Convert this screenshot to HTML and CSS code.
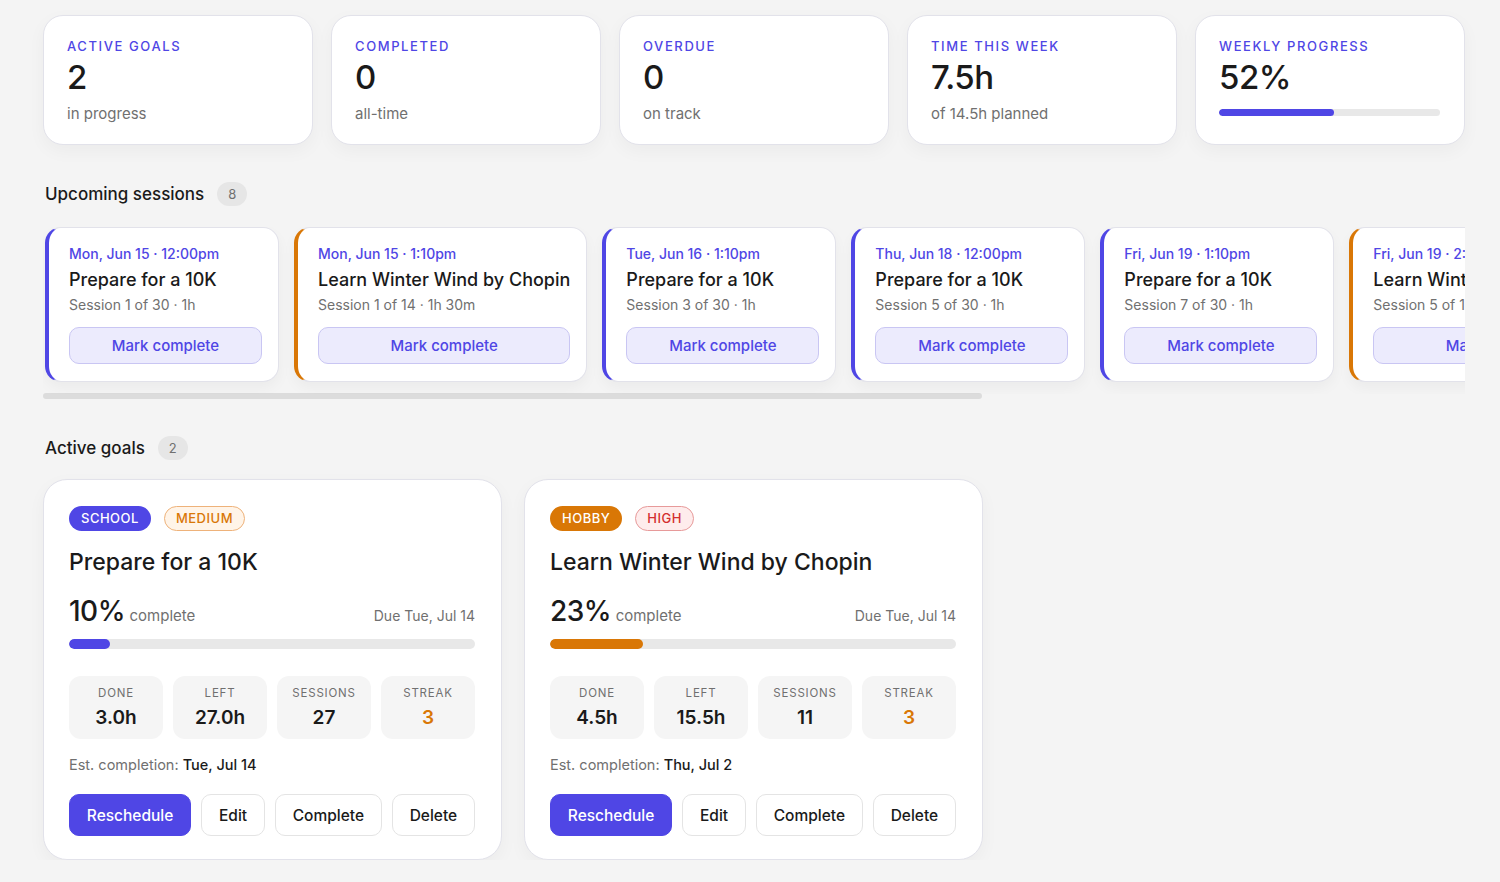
FILE: index.html
```html
<!DOCTYPE html>
<html lang="en">
<head>
    <meta charset="UTF-8">
    <meta name="viewport" content="width=device-width, initial-scale=1.0">
    <title>Goals Dashboard</title>
    <link rel="stylesheet" href="styles.css">
</head>
<body>
<div class="page">
    <div class="stats">
        <div class="stat-card">
            <div class="stat-label">Active goals</div>
            <div class="stat-value">2</div>
            <div class="stat-sub">in progress</div>
        </div>
        <div class="stat-card">
            <div class="stat-label">Completed</div>
            <div class="stat-value">0</div>
            <div class="stat-sub">all-time</div>
        </div>
        <div class="stat-card">
            <div class="stat-label">Overdue</div>
            <div class="stat-value">0</div>
            <div class="stat-sub">on track</div>
        </div>
        <div class="stat-card">
            <div class="stat-label">Time this week</div>
            <div class="stat-value">7.5h</div>
            <div class="stat-sub">of 14.5h planned</div>
        </div>
        <div class="stat-card">
            <div class="stat-label">Weekly progress</div>
            <div class="stat-value">52%</div>
            <div class="week-bar"><div class="week-fill" style="width: 52%"></div></div>
        </div>
    </div>

    <h2 class="section-title">Upcoming sessions <span class="count">8</span></h2>
    <div class="sessions">
        <div class="session-row">
            <div class="session school">
                <div class="session-date">Mon, Jun 15 · 12:00pm</div>
                <div class="session-title">Prepare for a 10K</div>
                <div class="session-sub">Session 1 of 30 · 1h</div>
                <button class="mark-btn">Mark complete</button>
            </div>
            <div class="session hobby">
                <div class="session-date">Mon, Jun 15 · 1:10pm</div>
                <div class="session-title">Learn Winter Wind by Chopin</div>
                <div class="session-sub">Session 1 of 14 · 1h 30m</div>
                <button class="mark-btn">Mark complete</button>
            </div>
            <div class="session school">
                <div class="session-date">Tue, Jun 16 · 1:10pm</div>
                <div class="session-title">Prepare for a 10K</div>
                <div class="session-sub">Session 3 of 30 · 1h</div>
                <button class="mark-btn">Mark complete</button>
            </div>
            <div class="session school">
                <div class="session-date">Thu, Jun 18 · 12:00pm</div>
                <div class="session-title">Prepare for a 10K</div>
                <div class="session-sub">Session 5 of 30 · 1h</div>
                <button class="mark-btn">Mark complete</button>
            </div>
            <div class="session school">
                <div class="session-date">Fri, Jun 19 · 1:10pm</div>
                <div class="session-title">Prepare for a 10K</div>
                <div class="session-sub">Session 7 of 30 · 1h</div>
                <button class="mark-btn">Mark complete</button>
            </div>
            <div class="session hobby">
                <div class="session-date">Fri, Jun 19 · 2:20pm</div>
                <div class="session-title">Learn Winter Wind by Chopin</div>
                <div class="session-sub">Session 5 of 14 · 1h 30m</div>
                <button class="mark-btn">Mark complete</button>
            </div>
            <div class="session hobby">
                <div class="session-date">Sat, Jun 20 · 1:10pm</div>
                <div class="session-title">Learn Winter Wind by Chopin</div>
                <div class="session-sub">Session 6 of 14 · 1h 30m</div>
                <button class="mark-btn">Mark complete</button>
            </div>
            <div class="session hobby">
                <div class="session-date">Sun, Jun 21 · 1:10pm</div>
                <div class="session-title">Learn Winter Wind by Chopin</div>
                <div class="session-sub">Session 7 of 14 · 1h 30m</div>
                <button class="mark-btn">Mark complete</button>
            </div>
        </div>
        <div class="scroll-track"><div class="scroll-thumb" style="width: 66%"></div></div>
    </div>

    <h2 class="section-title">Active goals <span class="count">2</span></h2>
    <div class="goals">
        <div class="goal-card">
            <div class="tags">
                <span class="tag tag-school">SCHOOL</span>
                <span class="tag tag-medium">MEDIUM</span>
            </div>
            <h3 class="goal-title">Prepare for a 10K</h3>
            <div class="goal-progress">
                <div><span class="pct">10%</span> <span class="pct-label">complete</span></div>
                <div class="due">Due Tue, Jul 14</div>
            </div>
            <div class="bar"><div class="fill fill-school" style="width: 10%"></div></div>
            <div class="mini-stats">
                <div class="mini"><div class="mini-label">DONE</div><div class="mini-value">3.0h</div></div>
                <div class="mini"><div class="mini-label">LEFT</div><div class="mini-value">27.0h</div></div>
                <div class="mini"><div class="mini-label">SESSIONS</div><div class="mini-value">27</div></div>
                <div class="mini"><div class="mini-label">STREAK</div><div class="mini-value streak">3</div></div>
            </div>
            <p class="est">Est. completion: <strong>Tue, Jul 14</strong></p>
            <div class="actions">
                <button class="btn btn-primary">Reschedule</button>
                <button class="btn">Edit</button>
                <button class="btn">Complete</button>
                <button class="btn">Delete</button>
            </div>
        </div>
        <div class="goal-card">
            <div class="tags">
                <span class="tag tag-hobby">HOBBY</span>
                <span class="tag tag-high">HIGH</span>
            </div>
            <h3 class="goal-title">Learn Winter Wind by Chopin</h3>
            <div class="goal-progress">
                <div><span class="pct">23%</span> <span class="pct-label">complete</span></div>
                <div class="due">Due Tue, Jul 14</div>
            </div>
            <div class="bar"><div class="fill fill-hobby" style="width: 23%"></div></div>
            <div class="mini-stats">
                <div class="mini"><div class="mini-label">DONE</div><div class="mini-value">4.5h</div></div>
                <div class="mini"><div class="mini-label">LEFT</div><div class="mini-value">15.5h</div></div>
                <div class="mini"><div class="mini-label">SESSIONS</div><div class="mini-value">11</div></div>
                <div class="mini"><div class="mini-label">STREAK</div><div class="mini-value streak">3</div></div>
            </div>
            <p class="est">Est. completion: <strong>Thu, Jul 2</strong></p>
            <div class="actions">
                <button class="btn btn-primary">Reschedule</button>
                <button class="btn">Edit</button>
                <button class="btn">Complete</button>
                <button class="btn">Delete</button>
            </div>
        </div>
    </div>
</div>
</body>
</html>
```

FILE: styles.css
```css
body {
    font-family: 'Inter', sans-serif;
    background-color: #f4f4f4;
    color: #1a1a1a;
    margin: 0;
    padding: 0;
}
.page {
    width: 1422px;
    padding: 15px 0 0 43px;
}
.stats {
    display: grid;
    grid-template-columns: repeat(5, 1fr);
    gap: 18px;
}
.stat-card {
    background: #ffffff;
    border: 1px solid #e2e2ea;
    border-radius: 20px;
    box-shadow: 0px 6px 18px rgba(0, 0, 0, 0.04);
    padding: 21px 24px 0 23px;
    height: 130px;
    box-sizing: border-box;
}
.stat-label {
    color: #4f46e5;
    font-size: 13px;
    font-weight: 500;
    letter-spacing: 1.6px;
    text-transform: uppercase;
    line-height: 18px;
}
.stat-value {
    font-size: 33px;
    font-weight: 500;
    line-height: 40px;
    margin-top: 2px;
    letter-spacing: -0.5px;
}
.stat-sub {
    color: #707070;
    font-size: 15px;
    margin-top: 7px;
}
.week-bar {
    height: 7px;
    background: #e8e8e8;
    border-radius: 4px;
    margin-top: 12px;
    overflow: hidden;
}
.week-fill {
    height: 100%;
    background: #4f46e5;
    border-radius: 4px;
}
.section-title {
    font-size: 17px;
    font-weight: 500;
    margin: 36px 0 0 2px;
    display: flex;
    align-items: center;
    gap: 13px;
    height: 26px;
}
.count {
    background: #e6e6e6;
    color: #707070;
    font-size: 13px;
    font-weight: 400;
    border-radius: 12px;
    padding: 0 11px;
    line-height: 24px;
}
.sessions {
    margin-top: 20px;
}
.session-row {
    display: flex;
    gap: 15px;
    overflow: hidden;
    padding: 0 2px 12px 2px;
}
.session {
    flex: 0 0 auto;
    min-width: 234px;
    box-sizing: border-box;
    background: #ffffff;
    border: 1px solid #e2e2ea;
    border-left: 4px solid #4f46e5;
    border-radius: 16px;
    padding: 16px 16px 17px 20px;
    box-shadow: 0px 6px 14px rgba(0, 0, 0, 0.04);
}
.session.hobby {
    border-left-color: #d97706;
}
.session-date {
    color: #4f46e5;
    font-size: 14px;
    font-weight: 500;
    line-height: 20px;
}
.session-title {
    font-size: 18px;
    font-weight: 500;
    line-height: 24px;
    margin-top: 4px;
    white-space: nowrap;
}
.session-sub {
    color: #707070;
    font-size: 14px;
    line-height: 20px;
    margin-top: 3px;
}
.mark-btn {
    display: block;
    width: 100%;
    margin-top: 12px;
    height: 37px;
    background: #ecebfd;
    border: 1px solid #c9c6f3;
    border-radius: 10px;
    color: #4f46e5;
    font-family: inherit;
    font-size: 15px;
    font-weight: 500;
}
.scroll-track {
    height: 6px;
    margin-top: -1px;
}
.scroll-thumb {
    height: 100%;
    background: #dcdcdc;
    border-radius: 3px;
}
.section-title + .goals {
    margin-top: 18px;
}
.goals {
    display: flex;
    gap: 22px;
}
.goal-card {
    width: 459px;
    box-sizing: border-box;
    background: #ffffff;
    border: 1px solid #e2e2ea;
    border-radius: 24px;
    padding: 26px 26px 23px 25px;
    box-shadow: 0px 6px 18px rgba(0, 0, 0, 0.04);
}
.tags {
    display: flex;
    gap: 13px;
}
.tag {
    font-size: 13px;
    font-weight: 500;
    letter-spacing: 0.5px;
    line-height: 23px;
    padding: 0 11px;
    border-radius: 13px;
    border: 1px solid transparent;
}
.tag-school {
    background: #4f46e5;
    color: #ffffff;
}
.tag-hobby {
    background: #d97706;
    color: #ffffff;
}
.tag-medium {
    background: #fff4e8;
    border-color: #eeb27a;
    color: #d97706;
}
.tag-high {
    background: #feecec;
    border-color: #e79a9a;
    color: #d32f2f;
}
.goal-title {
    font-size: 23px;
    font-weight: 500;
    margin: 16px 0 0 0;
    line-height: 30px;
}
.goal-progress {
    display: flex;
    justify-content: space-between;
    align-items: baseline;
    margin-top: 17px;
}
.pct {
    font-size: 28px;
    font-weight: 500;
    letter-spacing: -0.5px;
}
.pct-label {
    color: #707070;
    font-size: 15px;
}
.due {
    color: #707070;
    font-size: 14px;
}
.bar {
    height: 10px;
    background: #e8e8e8;
    border-radius: 5px;
    margin-top: 11px;
    overflow: hidden;
}
.fill {
    height: 100%;
    border-radius: 5px;
}
.fill-school {
    background: #4f46e5;
}
.fill-hobby {
    background: #d97706;
}
.mini-stats {
    display: grid;
    grid-template-columns: repeat(4, 1fr);
    gap: 10px;
    margin-top: 27px;
}
.mini {
    background: #f5f5f5;
    border-radius: 12px;
    height: 63px;
    text-align: center;
    padding-top: 10px;
    box-sizing: border-box;
}
.mini-label {
    color: #707070;
    font-size: 11.5px;
    letter-spacing: 0.8px;
    line-height: 14px;
}
.mini-value {
    font-size: 19px;
    font-weight: 600;
    margin-top: 6px;
}
.mini-value.streak {
    color: #d97706;
}
.est {
    color: #707070;
    font-size: 14.5px;
    margin: 16px 0 0 0;
    line-height: 20px;
}
.est strong {
    color: #1a1a1a;
    font-weight: 500;
}
.actions {
    display: flex;
    gap: 10px;
    margin-top: 19px;
}
.btn {
    height: 42px;
    padding: 0 16px;
    background: #ffffff;
    border: 1px solid #e4e4e4;
    border-radius: 10px;
    font-family: inherit;
    font-size: 15.5px;
    font-weight: 500;
    color: #1a1a1a;
    flex: 1 1 auto;
}
.btn-primary {
    background: #4f46e5;
    border-color: #4f46e5;
    color: #ffffff;
}
```
